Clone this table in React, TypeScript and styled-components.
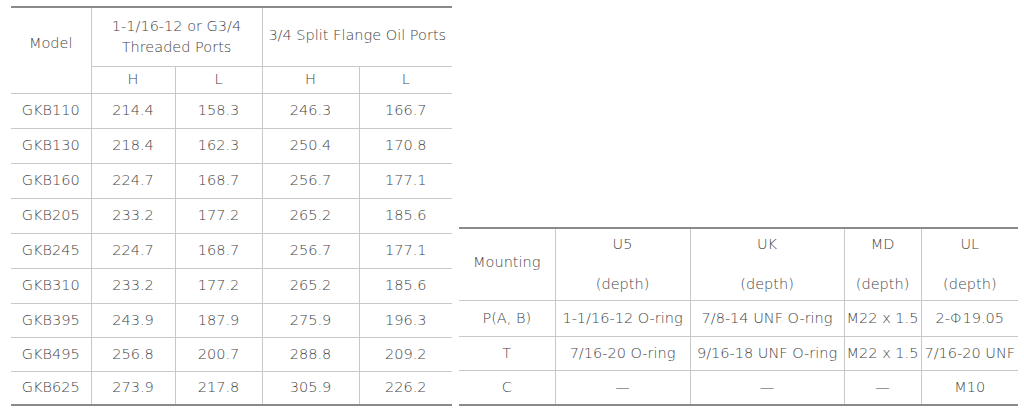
import React from "react";
import styled, { createGlobalStyle } from "styled-components";

const Global = createGlobalStyle`
  html, body { margin: 0; padding: 0; background: #ffffff; }
  body { font-family: "DejaVu Sans", "Liberation Sans", sans-serif; }
`;

const Page = styled.div`
  width: 1024px;
  height: 416px;
  box-sizing: border-box;
  padding: 6px 0 0 11px;
  display: flex;
  align-items: flex-start;
  gap: 7px;
`;

const RightWrap = styled.div`
  padding-top: 221px;
`;

const Table = styled.table<{ $w: number }>`
  width: ${(p) => p.$w}px;
  border-collapse: collapse;
  table-layout: fixed;
  border-top: 2px solid #8a8a8a;
  border-bottom: 2px solid #8a8a8a;
  color: #454545;
  font-size: 14.5px;
  font-weight: 200;
`;

const Row = styled.tr<{ $h: number }>`
  height: ${(p) => p.$h}px;
`;

const Cell = styled.td<{ $first?: boolean; $pb?: number }>`
  text-align: center;
  vertical-align: middle;
  padding: 0 0 ${(p) => p.$pb ?? 0}px 0;
  border-top: 1px solid #c8c8c8;
  border-left: ${(p) => (p.$first ? "none" : "1px solid #c8c8c8")};
  white-space: nowrap;
  line-height: 21px;
`;

const Stack = styled.div<{ $gap: number }>`
  display: flex;
  flex-direction: column;
  align-items: center;
  gap: ${(p) => p.$gap}px;
`;

const models: [string, string, string, string, string][] = [
  ["GKB110", "214.4", "158.3", "246.3", "166.7"],
  ["GKB130", "218.4", "162.3", "250.4", "170.8"],
  ["GKB160", "224.7", "168.7", "256.7", "177.1"],
  ["GKB205", "233.2", "177.2", "265.2", "185.6"],
  ["GKB245", "224.7", "168.7", "256.7", "177.1"],
  ["GKB310", "233.2", "177.2", "265.2", "185.6"],
  ["GKB395", "243.9", "187.9", "275.9", "196.3"],
  ["GKB495", "256.8", "200.7", "288.8", "209.2"],
  ["GKB625", "273.9", "217.8", "305.9", "226.2"],
];
const modelHeights = [35, 35, 35, 35, 35, 35, 34, 34, 34];

const mounts: [string, string, string, string, string][] = [
  ["P(A, B)", "1-1/16-12 O-ring", "7/8-14 UNF O-ring", "M22 x 1.5", "2-Φ19.05"],
  ["T", "7/16-20 O-ring", "9/16-18 UNF O-ring", "M22 x 1.5", "7/16-20 UNF"],
  ["C", "—", "—", "—", "M10"],
];
const mountHeights = [36, 34, 35];

export default function App() {
  return (
    <>
      <Global />
      <Page>
        <Table $w={441}>
          <colgroup>
            <col style={{ width: 80 }} />
            <col style={{ width: 84 }} />
            <col style={{ width: 87 }} />
            <col style={{ width: 97 }} />
            <col style={{ width: 93 }} />
          </colgroup>
          <tbody>
            <Row $h={59}>
              <Cell $first rowSpan={2} $pb={14}>Model</Cell>
              <Cell colSpan={2}>
                1-1/16-12 or G3/4
                <br />
                Threaded Ports
              </Cell>
              <Cell colSpan={2} $pb={3}>3/4 Split Flange Oil Ports</Cell>
            </Row>
            <Row $h={27}>
              <Cell>H</Cell>
              <Cell>L</Cell>
              <Cell>H</Cell>
              <Cell>L</Cell>
            </Row>
            {models.map((r, i) => (
              <Row key={r[0]} $h={modelHeights[i]}>
                {r.map((v, j) => (
                  <Cell key={j} $first={j === 0}>{v}</Cell>
                ))}
              </Row>
            ))}
          </tbody>
        </Table>
        <RightWrap>
          <Table $w={559}>
            <colgroup>
              <col style={{ width: 96 }} />
              <col style={{ width: 135 }} />
              <col style={{ width: 154 }} />
              <col style={{ width: 77 }} />
              <col style={{ width: 97 }} />
            </colgroup>
            <tbody>
              <Row $h={72}>
                <Cell $first $pb={4}>Mounting</Cell>
                {["U5", "UK", "MD", "UL"].map((h) => (
                  <Cell key={h}>
                    <Stack $gap={19}>
                      <span>{h}</span>
                      <span>(depth)</span>
                    </Stack>
                  </Cell>
                ))}
              </Row>
              {mounts.map((r, i) => (
                <Row key={r[0]} $h={mountHeights[i]}>
                  {r.map((v, j) => (
                    <Cell key={j} $first={j === 0}>{v}</Cell>
                  ))}
                </Row>
              ))}
            </tbody>
          </Table>
        </RightWrap>
      </Page>
    </>
  );
}
